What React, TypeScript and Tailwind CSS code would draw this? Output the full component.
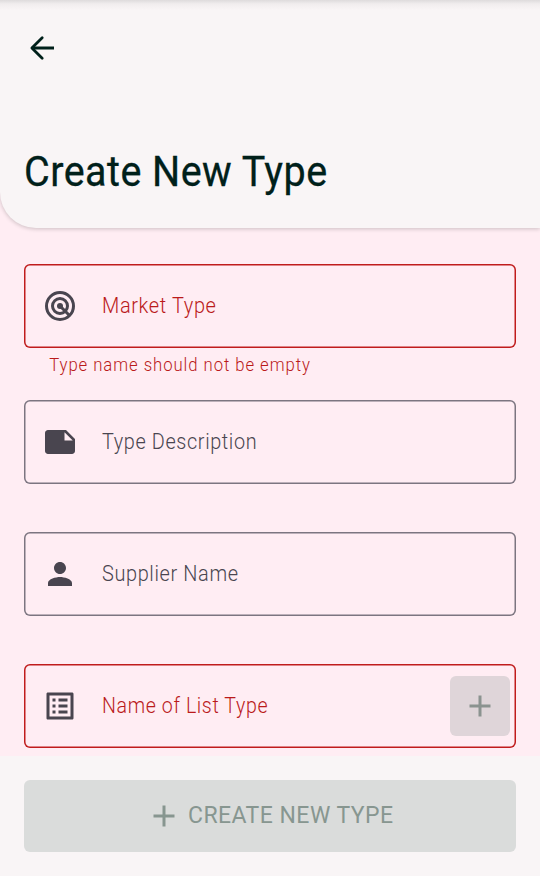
import React from "react";
import { MdNote, MdPerson, MdListAlt, MdAdd } from "react-icons/md";

function TargetIcon() {
  return (
    <svg viewBox="0 0 36 36" className="h-9 w-9" fill="none" stroke="currentColor" strokeWidth="3">
      <circle cx="18" cy="18" r="13.5" />
      <circle cx="18" cy="18" r="7.5" />
      <circle cx="18" cy="18" r="3" fill="currentColor" stroke="none" />
      <path d="M18 18L27.5 27.5" />
    </svg>
  );
}

interface FieldProps {
  label: string;
  icon: React.ReactNode;
  error?: boolean;
  fit: string;
  action?: React.ReactNode;
}

function Field({ label, icon, error, fit, action }: FieldProps) {
  return (
    <div
      className={`flex h-[84px] shrink-0 items-center rounded-md pl-[18px] pr-1.5 ${
        error
          ? "text-[#ba1a1a] shadow-[inset_0_0_0_1.5px_#c01c1c]"
          : "text-[#49454f] shadow-[inset_0_0_0_1.5px_#7c7580]"
      }`}
    >
      <span className="flex h-9 w-9 items-center justify-center text-[#49454f]">{icon}</span>
      <span
        className={`ml-6 grow origin-left whitespace-nowrap text-[22px] leading-8 font-light tracking-[0.7px] ${fit}`}
      >
        {label}
      </span>
      {action}
    </div>
  );
}

export default function App() {
  return (
    <div className="flex h-[876px] w-[540px] flex-col overflow-hidden bg-[#ffedf3] font-['Roboto',sans-serif]">
      <header className="relative h-[228px] shrink-0 rounded-bl-[36px] bg-[#f9f5f6] px-6 pt-[30px] shadow-[0_1px_4px_rgba(0,0,0,0.2)]">
        <div className="absolute inset-x-0 top-0 h-2.5 bg-linear-to-b from-[#dedbdc] via-[#f1edee] via-40% to-[#f9f5f6]" />
        <svg viewBox="0 0 36 36" className="h-9 w-9 text-[#00201a]" fill="none" stroke="currentColor" strokeWidth="3">
          <path d="M30 18H8" />
          <path d="M18.2 7.7L7.9 18L18.2 28.3" strokeLinecap="round" strokeLinejoin="round" strokeWidth="2.8" />
        </svg>
        <h1 className="mt-[78px] origin-left scale-x-[0.94] whitespace-nowrap text-[42px] leading-[56px] tracking-[0.5px] text-[#00201a] [-webkit-text-stroke:0.3px_#00201a]">
          Create New Type
        </h1>
      </header>
      <main className="flex h-[528px] shrink-0 flex-col px-6 pt-9">
        <Field label="Market Type" icon={<TargetIcon />} error fit="scale-x-[0.907]" />
        <p className="mb-[16.4px] ml-px h-9 origin-left scale-x-[0.93] pl-[26px] pt-1 whitespace-nowrap text-[18px] leading-[26px] font-light tracking-[1px] text-[#ba1a1a]">
          Type name should not be empty
        </p>
        <Field label="Type Description" icon={<MdNote size={36} />} fit="scale-x-[0.901]" />
        <div className="h-12 shrink-0" />
        <Field label="Supplier Name" icon={<MdPerson size={36} />} fit="scale-x-[0.905]" />
        <div className="h-12 shrink-0" />
        <Field
          label="Name of List Type"
          icon={<MdListAlt size={36} />}
          error
          fit="scale-x-[0.89]"
          action={
            <button className="flex h-[60px] w-[60px] shrink-0 items-center justify-center rounded-md bg-[#dfd5d9] text-[#8b9390]">
              <MdAdd size={36} />
            </button>
          }
        />
      </main>
      <footer className="h-[120px] shrink-0 bg-[#f9f5f6] px-6 pt-6">
        <button className="flex h-[72px] w-full items-center rounded-md bg-[#dadcdb] pl-[121.5px] text-[#879690]">
          <MdAdd size={36} />
          <span className="mb-0.5 ml-[6px] origin-left scale-x-[0.957] whitespace-nowrap text-[24px] leading-9 tracking-[0.5px]">
            CREATE NEW TYPE
          </span>
        </button>
      </footer>
    </div>
  );
}
